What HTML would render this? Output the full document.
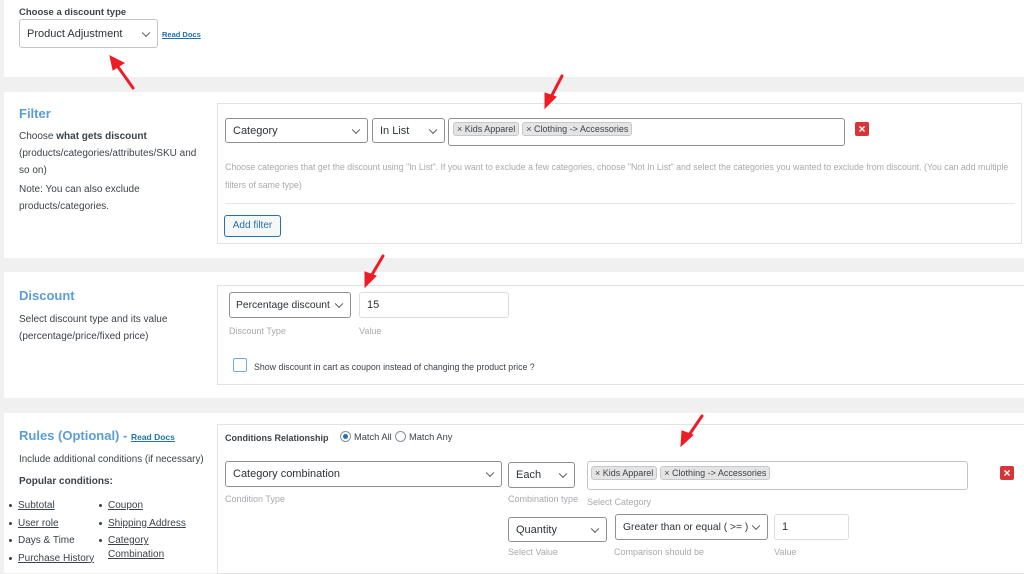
<!DOCTYPE html>
<html><head><meta charset="utf-8"><style>
*{box-sizing:border-box;margin:0;padding:0}
body{width:1024px;height:565px;background:#f0f0f1;font-family:"Liberation Sans",sans-serif;color:#3c434a;position:relative;overflow:hidden;font-size:10px}
.p{position:absolute;background:#fff}
.a{position:absolute}
.sel,.inp{position:absolute;border:1px solid #8c8f94;border-radius:3px;background:#fff;font-size:11px;color:#2c3338;padding-left:7px;display:flex;align-items:center;white-space:nowrap}
.inp{border-color:#dcdcde}
.sel:after{content:"";position:absolute;right:8px;top:50%;width:5px;height:5px;border-right:1.3px solid #50575e;border-bottom:1.3px solid #50575e;transform:translateY(-70%) rotate(45deg)}
.box{position:absolute;border:1px solid #e2e2e2;background:#fff}
.h{color:#5b9dd9;font-size:13px;font-weight:bold}
.lab{position:absolute;color:#a7aaad;font-size:9px}
.tag{display:inline-block;background:#e4e4e4;border:1px solid #c8c8c8;border-radius:3px;font-size:9px;padding:1px 3px;margin-right:3px;color:#3c434a}
.x{position:absolute;width:14px;height:14px;background:#d63638;border-radius:2px;color:#fff;font-size:12px;line-height:14px;text-align:center;font-weight:bold}
.t{font-size:10px;line-height:17px}
a{color:#3c434a;text-decoration:underline}
ul{list-style:none}
li{font-size:10px;height:17.5px;line-height:14px;position:relative;padding-left:10px}
li:before{content:"";position:absolute;left:1px;top:5px;width:3px;height:3px;border-radius:50%;background:#3c434a}
</style></head><body>

<div class="p" style="left:4px;top:0;width:1020px;height:77px"></div>
<div class="a" style="left:19px;top:7px;font-size:9.5px;font-weight:bold">Choose a discount type</div>
<div class="sel" style="left:19px;top:19px;width:139px;height:29px;border-color:#c3c4c7">Product Adjustment</div>
<a class="a" style="left:162px;top:30px;font-size:7.5px;color:#2271b1;font-weight:bold">Read Docs</a>

<div class="p" style="left:4px;top:92px;width:1020px;height:166px"></div>
<div class="a h" style="left:19px;top:106px">Filter</div>
<div class="a t" style="left:19px;top:128px;width:190px">Choose <b>what gets discount</b> (products/categories/attributes/SKU and so on)</div>
<div class="a t" style="left:19px;top:181px;width:190px">Note: You can also exclude products/categories.</div>
<div class="box" style="left:217px;top:103px;width:805px;height:141px"></div>
<div class="sel" style="left:225px;top:118px;width:143px;height:25px">Category</div>
<div class="sel" style="left:372px;top:118px;width:73px;height:25px">In List</div>
<div class="inp" style="left:448px;top:118px;width:397px;height:28px;border-color:#8c8f94;align-items:flex-start;padding:3px 4px"><span class="tag">× Kids Apparel</span><span class="tag">× Clothing -&gt; Accessories</span></div>
<div class="x" style="left:855px;top:122px">×</div>
<div class="a" style="left:225px;top:158px;width:795px;color:#a7aaad;font-size:8.8px;line-height:18px">Choose categories that get the discount using "In List". If you want to exclude a few categories, choose "Not In List" and select the categories you wanted to exclude from discount. (You can add multiple filters of same type)</div>
<div class="a" style="left:225px;top:203px;width:790px;height:1px;background:#e6e6e6"></div>
<div class="a" style="left:224px;top:215px;width:57px;height:22px;border:1px solid #2271b1;border-radius:3px;background:#f6f7f7;color:#2271b1;font-size:10px;text-align:center;line-height:20px">Add filter</div>

<div class="p" style="left:4px;top:272px;width:1020px;height:126px"></div>
<div class="a h" style="left:19px;top:288px">Discount</div>
<div class="a t" style="left:19px;top:311px;width:190px">Select discount type and its value (percentage/price/fixed price)</div>
<div class="box" style="left:217px;top:285px;width:810px;height:100px"></div>
<div class="sel" style="left:229px;top:292px;width:122px;height:26px;padding-left:6px;font-size:10.3px">Percentage discount</div>
<div class="inp" style="left:359px;top:292px;width:150px;height:26px">15</div>
<div class="lab" style="left:229px;top:326px">Discount Type</div>
<div class="lab" style="left:359px;top:326px">Value</div>
<div class="a" style="left:233px;top:358px;width:14px;height:14px;border:1.5px solid #72aee6;border-radius:2px"></div>
<div class="a" style="left:254px;top:362px;font-size:8.8px">Show discount in cart as coupon instead of changing the product price ?</div>

<div class="p" style="left:4px;top:413px;width:1020px;height:160px"></div>
<div class="a h" style="left:19px;top:428px">Rules (Optional) - <a style="font-size:8.5px;color:#2271b1">Read Docs</a></div>
<div class="a t" style="left:19px;top:451px;font-size:9.8px">Include additional conditions (if necessary)</div>
<div class="a t" style="left:19px;top:473px;font-weight:bold">Popular conditions:</div>
<ul class="a" style="left:8px;top:499px"><li><a>Subtotal</a></li><li><a>User role</a></li><li>Days &amp; Time</li><li><a>Purchase History</a></li></ul>
<ul class="a" style="left:98px;top:499px"><li><a>Coupon</a></li><li><a>Shipping Address</a></li><li><a>Category<br>Combination</a></li></ul>
<div class="box" style="left:217px;top:424px;width:810px;height:150px"></div>
<div class="a" style="left:225px;top:433px;font-size:9px;font-weight:bold">Conditions Relationship</div>
<div class="a" style="left:340px;top:431px;width:11px;height:11px;border:1px solid #8c8f94;border-radius:50%"><div style="margin:2px;width:5px;height:5px;border-radius:50%;background:#2271b1"></div></div>
<div class="a" style="left:354px;top:432px;font-size:9.3px">Match All</div>
<div class="a" style="left:395px;top:431px;width:11px;height:11px;border:1px solid #8c8f94;border-radius:50%"></div>
<div class="a" style="left:409px;top:432px;font-size:9.3px">Match Any</div>
<div class="sel" style="left:225px;top:461px;width:277px;height:26px">Category combination</div>
<div class="sel" style="left:508px;top:462px;width:67px;height:26px">Each</div>
<div class="inp" style="left:587px;top:461px;width:381px;height:29px;border-color:#c3c4c7;align-items:flex-start;padding:4px 3px"><span class="tag">× Kids Apparel</span><span class="tag">× Clothing -&gt; Accessories</span></div>
<div class="x" style="left:1000px;top:466px">×</div>
<div class="lab" style="left:225px;top:494px">Condition Type</div>
<div class="lab" style="left:508px;top:494px">Combination type</div>
<div class="lab" style="left:587px;top:497px">Select Category</div>
<div class="sel" style="left:508px;top:517px;width:99px;height:25px">Quantity</div>
<div class="sel" style="left:615px;top:514px;width:153px;height:26px;font-size:10.3px">Greater than or equal ( &gt;= )</div>
<div class="inp" style="left:774px;top:514px;width:75px;height:26px">1</div>
<div class="lab" style="left:508px;top:547px">Select Value</div>
<div class="lab" style="left:614px;top:547px">Comparison should be</div>
<div class="lab" style="left:774px;top:547px">Value</div>

<svg class="a" style="left:0;top:0" width="1024" height="565">
<g fill="#ee1c25" stroke="#ee1c25" stroke-width="3" stroke-linecap="round">
<line x1="133" y1="88" x2="116" y2="64"/><polygon points="110,56 124,63 113,70" stroke-width="1"/>
<line x1="562" y1="76" x2="550" y2="99"/><polygon points="545,108 545,93 556,97" stroke-width="1"/>
<line x1="383" y1="256" x2="370" y2="278"/><polygon points="365,287 365,272 376,276" stroke-width="1"/>
<line x1="702" y1="416" x2="687" y2="438"/><polygon points="681,446 682,431 693,435" stroke-width="1"/>
</g></svg>
</body></html>
